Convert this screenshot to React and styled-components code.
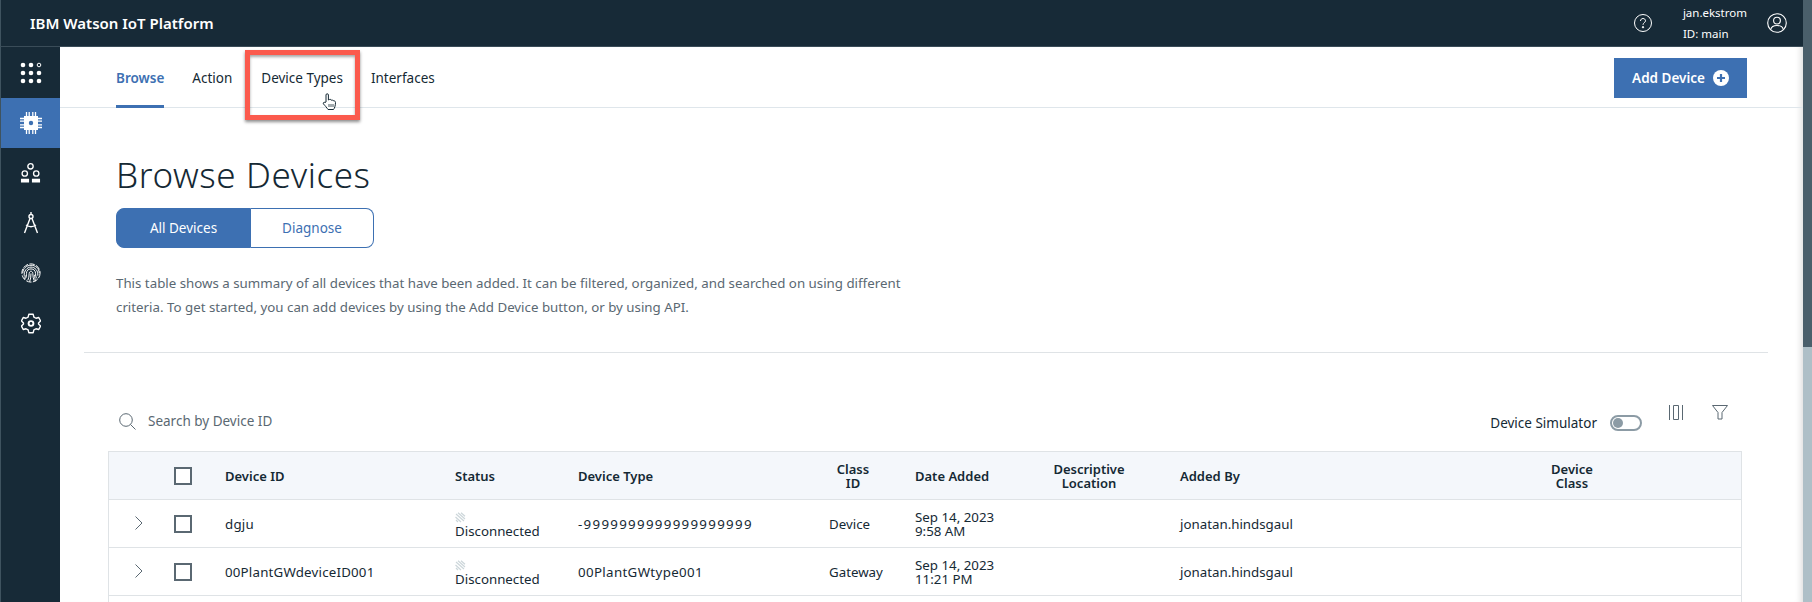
import React from "react";
import styled, { createGlobalStyle } from "styled-components";

const GlobalStyle = createGlobalStyle`
  html, body {
    margin: 0;
    padding: 0;
    height: 602px;
    overflow: hidden;
    background: #fff;
    font-family: "Noto Sans", "Liberation Sans", sans-serif;
    color: #152934;
  }
  * { box-sizing: border-box; }
`;

const Screen = styled.div`
  display: flex;
  width: 1812px;
  height: 602px;
  overflow: hidden;
`;

const Main = styled.div`
  flex: 1;
  display: flex;
  flex-direction: column;
  min-width: 0;
`;

const Scrollbar = styled.div`
  width: 9px;
  background: #aebfc7;
  display: flex;
  flex-direction: column;
`;

const ScrollThumb = styled.div`
  height: 347px;
  background: #4a5f6b;
`;

const Header = styled.header`
  height: 47px;
  flex: none;
  background: #172a37;
  border-left: 1px solid #3f535f;
  border-bottom: 1px solid #3a4c58;
  display: flex;
  align-items: center;
  padding: 0 16px 0 29px;
  color: #fff;
`;

const Brand = styled.div`
  font-size: 15px;
  font-weight: 600;
  flex: 1;
`;

const HeaderIcon = styled.div`
  display: flex;
  color: #fff;
`;

const User = styled.div`
  margin: 0 20px 0 31px;
  font-size: 11.5px;
  line-height: 21px;
  color: #fff;
`;

const Body = styled.div`
  flex: 1;
  display: flex;
  min-height: 0;
`;

const Sidebar = styled.nav`
  width: 60px;
  flex: none;
  background: #172a37;
  border-left: 1px solid #3f535f;
  padding-top: 1px;
`;

const SideItem = styled.div`
  height: 50px;
  display: flex;
  align-items: center;
  justify-content: center;
  color: #fff;
  background: ${(p) => (p.$active ? "#3d70b2" : "transparent")};
`;

const Content = styled.main`
  flex: 1;
  min-width: 0;
  box-shadow: inset -7px 0 6px -5px rgba(0, 0, 0, 0.14);
`;

const TabBar = styled.div`
  height: 61px;
  display: flex;
  align-items: flex-start;
  justify-content: space-between;
  padding: 11px 56px 0 56px;
  border-bottom: 1px solid #dfe6eb;
`;

const Tabs = styled.div`
  display: flex;
  height: 50px;
`;

const Tab = styled.div`
  position: relative;
  height: 50px;
  padding-top: 10px;
  margin-left: ${(p) => p.$gap}px;
  font-size: 13.5px;
  line-height: 20px;
  color: ${(p) => (p.$active ? "#3d70b2" : "#152934")};
  font-weight: ${(p) => (p.$active ? 600 : 400)};
  border-bottom: 3px solid ${(p) => (p.$active ? "#3d70b2" : "transparent")};
`;

const Highlight = styled.div`
  position: absolute;
  left: -16px;
  top: -8px;
  width: 115px;
  height: 70px;
  border: 5px solid #fb5a4d;
  box-shadow: 0 2px 3px rgba(0, 0, 0, 0.45), inset 0 2px 3px rgba(0, 0, 0, 0.35);
  pointer-events: none;
`;

const Cursor = styled.svg`
  position: absolute;
  left: 61px;
  top: 35px;
`;

const AddButton = styled.button`
  width: 133px;
  height: 40px;
  border: 0;
  background: #3d70b2;
  color: #fff;
  font: 600 13.5px "Noto Sans", sans-serif;
  display: flex;
  align-items: center;
  justify-content: center;
  gap: 8px;
  padding: 0;
`;

const PageHead = styled.section`
  padding: 0 0 0 56px;
`;

const Title = styled.h1`
  margin: 0;
  padding-top: 43px;
  font-size: 35px;
  line-height: 48px;
  font-weight: 300;
  color: #152934;
  letter-spacing: 0.6px;
`;

const Switcher = styled.div`
  display: flex;
  width: 258px;
  height: 40px;
  margin-top: 9px;
`;

const SwitchButton = styled.div`
  flex: ${(p) => (p.$on ? "0 0 135px" : "1")};
  display: flex;
  align-items: center;
  justify-content: center;
  font-size: 13.5px;
  color: ${(p) => (p.$on ? "#fff" : "#3d70b2")};
  background: ${(p) => (p.$on ? "#3d70b2" : "#fff")};
  border: 1px solid #3d70b2;
  border-left-width: ${(p) => (p.$on ? "1px" : "0")};
  border-radius: ${(p) => (p.$on ? "8px 0 0 8px" : "0 8px 8px 0")};
`;

const Description = styled.p`
  margin: 23px 0 0;
  width: 800px;
  font-size: 13.3px;
  line-height: 24px;
  color: #5a6872;
`;

const Divider = styled.hr`
  margin: 33px 35px 0 24px;
  border: 0;
  border-top: 1px solid #dfe3e6;
`;

const Toolbar = styled.div`
  height: 98px;
  padding-left: 59px;
  padding-right: 75px;
  display: flex;
  align-items: flex-start;
`;

const Search = styled.div`
  display: flex;
  align-items: center;
  gap: 12px;
  flex: 1;
  margin-top: 59px;
  font-size: 13.5px;
  color: #5a6872;
`;

const Simulator = styled.div`
  display: flex;
  align-items: center;
  margin-top: 61px;
  font-size: 13.5px;
  color: #152934;
`;

const Toggle = styled.div`
  position: relative;
  width: 32px;
  height: 16px;
  margin-left: 13px;
  border: 2px solid #8c9ba5;
  border-radius: 8px;
  background: #fff;
`;

const Knob = styled.div`
  position: absolute;
  left: 1px;
  top: 1px;
  width: 10px;
  height: 10px;
  border-radius: 50%;
  background: #8c9ba5;
`;

const ToolIcon = styled.div`
  display: flex;
  margin-top: 52px;
  margin-left: ${(p) => p.$gap}px;
  color: #5a6872;
`;

const Table = styled.div`
  margin: 0 61px 0 48px;
  border: 1px solid #dfe3e6;
  border-bottom: 0;
`;

const Row = styled.div`
  display: grid;
  grid-template-columns: 51px 65px 230px 123px 251px 86px 135px 130px 320px 1fr;
  align-items: center;
  height: 48px;
  border-bottom: 1px solid #dfe3e6;
  background: ${(p) => (p.$head ? "#f4f7fb" : "#fff")};
  font-size: 13.3px;
  color: #152934;
`;

const HeadCell = styled.div`
  font-weight: 600;
  font-size: 13px;
  line-height: 14px;
  text-align: ${(p) => (p.$pad ? "center" : "left")};
  padding-right: ${(p) => p.$pad || 0}px;
`;

const Cell = styled.div`
  line-height: 14px;
  letter-spacing: ${(p) => p.$spacing || 0}px;
`;

const StatusCell = styled.div`
  display: flex;
  flex-direction: column;
  line-height: 16px;
  padding-top: 4px;
`;

const Expander = styled.div`
  display: flex;
  justify-content: center;
  padding-left: 8px;
  padding-bottom: 2px;
  color: #5a6872;
`;

const Checkbox = styled.div`
  width: 18px;
  height: 18px;
  margin-left: 14px;
  border: 2px solid #5a6872;
  background: #fff;
`;

const icon = { fill: "none", stroke: "currentColor", strokeWidth: 1.4 };

const gridDots = [3, 11, 19].flatMap((y) => [3, 11, 19].map((x) => ({ x, y })));

const GridIcon = () => (
  <svg width="22" height="22" viewBox="0 0 22 22" fill="currentColor">
    {gridDots.map(({ x, y }) =>
      x === 19 && y === 3 ? (
        <circle key={`${x}-${y}`} cx={x} cy={y} r="1.8" fill="none" stroke="currentColor" strokeWidth="1" />
      ) : (
        <circle key={`${x}-${y}`} cx={x} cy={y} r="2.3" />
      )
    )}
  </svg>
);

const ChipIcon = () => (
  <svg width="22" height="22" viewBox="0 0 22 22" fill="currentColor">
    <path d="M6.500 0v22M9.200 0v22M12.800 0v22M15.500 0v22M0 6.500h22M0 9.200h22M0 12.800h22M0 15.500h22" stroke="currentColor" strokeWidth="1.300" />
    <path d="M4 4h14v14H4z" />
    <circle cx="11" cy="11" r="2.200" fill="#3d70b2" />
  </svg>
);

const PeopleIcon = () => (
  <svg width="21" height="21" viewBox="0 0 22 22">
    <circle cx="11" cy="3.500" r="2.800" {...icon} />
    <circle cx="5" cy="11" r="2.800" {...icon} />
    <circle cx="17" cy="11" r="2.800" {...icon} />
    <path d="M1 16.500h8.500V20.500H1zM12.500 16.500H21V20.500h-8.500z" fill="currentColor" />
  </svg>
);

const CompassIcon = () => (
  <svg width="22" height="22" viewBox="0 0 22 22">
    <circle cx="11" cy="4.500" r="2" {...icon} />
    <path d="M11 0v2.500M10 6.500 4.500 21M12 6.500 17.500 21M6 13c3 2 7 2 10 0" {...icon} />
  </svg>
);

const FingerprintIcon = () => (
  <svg width="20" height="20" viewBox="0 0 22 22" fill="none" stroke="currentColor" strokeWidth="1.100">
    <circle cx="11" cy="11" r="10" strokeDasharray="6 1.500" />
    <path d="M2 11c0-5 4-8.500 9-8.500s9 3.500 9 8.500" />
    <path d="M3.500 14c-.5-5 3-9.500 7.500-9.500s8 4 7.500 9.500" />
    <path d="M5 17c1-1.500 1-3.500 1-5.500 0-3 2-5 5-5s5 2 5 5c0 2.500.5 4 1.500 5.500" />
    <path d="M7.500 19c1-2 1.500-4.500 1.500-7.500 0-1 .8-2.500 2-2.500s2 1.500 2 2.500c0 3 .5 5.500 1.500 8" />
    <path d="M11 11.500c0 3.500-.5 6.500-1.500 9M4 17.500c.5-1 .5-2.500.5-4M16 20c-.5-2-1-4-1-7" />
  </svg>
);

const GearIcon = () => (
  <svg width="20" height="21" viewBox="0 0 22 24" fill="none" stroke="currentColor" strokeWidth="1.600">
    <path d="M8.500 1.500h5l.8 3.200 2.400 1.300 3.200-.9 2 3.900-2.300 2.500v1l2.300 2.500-2 3.900-3.200-.9-2.400 1.300-.8 3.200h-5l-.8-3.200-2.400-1.300-3.200.9-2-3.900L2.400 12.500v-1L.1 9l2-3.900 3.200.9 2.400-1.300z" strokeLinejoin="round" />
    <circle cx="11" cy="12" r="3.800" fill="currentColor" stroke="none" />
    <circle cx="11" cy="12" r="1.600" fill="#172a37" stroke="none" />
  </svg>
);

const HelpIcon = () => (
  <svg width="18" height="18" viewBox="0 0 18 18" fill="none" stroke="currentColor" strokeWidth="1">
    <circle cx="9" cy="9" r="8.500" />
    <path d="M6.500 7c0-1.500 1.100-2.500 2.500-2.500s2.500 1 2.500 2.300c0 1.800-2.500 1.900-2.500 4" />
    <circle cx="9" cy="13.200" r=".7" fill="currentColor" />
  </svg>
);

const UserIcon = () => (
  <svg width="20" height="20" viewBox="0 0 20 20" fill="none" stroke="currentColor" strokeWidth="1.100">
    <circle cx="10" cy="10" r="9.300" />
    <circle cx="10" cy="7.600" r="3.400" />
    <path d="M3.800 16.500c.5-2.800 2.600-4 6.200-4s5.700 1.200 6.200 4" />
  </svg>
);

const PlusIcon = () => (
  <svg width="16" height="16" viewBox="0 0 16 16">
    <circle cx="8" cy="8" r="8" fill="#fff" />
    <path d="M8 4v8M4 8h8" stroke="#3d70b2" strokeWidth="2.200" />
  </svg>
);

const SearchIcon = () => (
  <svg width="17" height="17" viewBox="0 0 17 17" fill="none" stroke="#5a6872" strokeWidth="1">
    <circle cx="7" cy="7" r="6.300" />
    <path d="M11.500 11.500 16.500 16.500" />
  </svg>
);

const ColumnsIcon = () => (
  <svg width="14" height="15" viewBox="0 0 14 15" fill="none" stroke="currentColor" strokeWidth="1">
    <path d="M.5 0v15M13.500 0v15M4.500.5h5v14h-5z" />
  </svg>
);

const FilterIcon = () => (
  <svg width="16" height="15" viewBox="0 0 16 15" fill="none" stroke="currentColor" strokeWidth="1">
    <path d="M.5.500h15L10 7.500v6.500H6V7.500z" />
  </svg>
);

const ChevronIcon = () => (
  <svg width="8" height="14" viewBox="0 0 8 14" fill="none" stroke="currentColor" strokeWidth="1">
    <path d="M.5.500 7 7 .5 13.500" />
  </svg>
);

const StatusIcon = () => (
  <svg width="11" height="11" viewBox="0 0 11 11" fill="none" stroke="#ccd6da" strokeWidth="1.200">
    <path d="M1 2l8 7M.5 5l5.500 5M3 .8l7 6.200M6 .8l4 3.500M1 8l2 2" />
  </svg>
);

const HandCursor = () => (
  <Cursor width="15" height="17" viewBox="0 0 15 17" fill="#fff" stroke="#152934" strokeWidth="1">
    <path d="M4 9V2a1.200 1.200 0 0 1 2.400 0v5l1-.5a1 1 0 0 1 1.500.500l1 .2a1 1 0 0 1 1.400.500l.8.200c1 0 1.400.8 1.400 1.600 0 3-1 6-2 7H6c-1-1.500-3-4-4.500-5.500-.8-1 .5-2.300 1.500-1.500z" />
    <path d="M7 11v3M9 11v3M11 11v3" strokeWidth=".8" />
  </Cursor>
);

const devices = [
  { id: "dgju", type: "-9999999999999999999", typeSpacing: 1.3, cls: "Device", date: "Sep 14, 2023", time: "9:58 AM" },
  { id: "00PlantGWdeviceID001", type: "00PlantGWtype001", typeSpacing: 0.35, cls: "Gateway", date: "Sep 14, 2023", time: "11:21 PM" },
];

const App = () => (
  <>
    <GlobalStyle />
    <Screen>
      <Main>
        <Header>
          <Brand>IBM Watson IoT Platform</Brand>
          <HeaderIcon><HelpIcon /></HeaderIcon>
          <User>
            jan.ekstrom
            <br />
            ID: main
          </User>
          <HeaderIcon><UserIcon /></HeaderIcon>
        </Header>
        <Body>
          <Sidebar>
            <SideItem><GridIcon /></SideItem>
            <SideItem $active><ChipIcon /></SideItem>
            <SideItem><PeopleIcon /></SideItem>
            <SideItem><CompassIcon /></SideItem>
            <SideItem><FingerprintIcon /></SideItem>
            <SideItem><GearIcon /></SideItem>
          </Sidebar>
          <Content>
            <TabBar>
              <Tabs>
                <Tab $active>Browse</Tab>
                <Tab $gap={28}>Action</Tab>
                <Tab $gap={29}>
                  Device Types
                  <Highlight />
                  <HandCursor />
                </Tab>
                <Tab $gap={28}>Interfaces</Tab>
              </Tabs>
              <AddButton>Add Device <PlusIcon /></AddButton>
            </TabBar>
            <PageHead>
              <Title>Browse Devices</Title>
              <Switcher>
                <SwitchButton $on>All Devices</SwitchButton>
                <SwitchButton>Diagnose</SwitchButton>
              </Switcher>
              <Description>
                This table shows a summary of all devices that have been added. It can be filtered, organized, and searched on using different criteria. To get started, you can add devices by using the Add Device button, or by using API.
              </Description>
            </PageHead>
            <Divider />
            <Toolbar>
              <Search><SearchIcon />Search by Device ID</Search>
              <Simulator>Device Simulator<Toggle><Knob /></Toggle></Simulator>
              <ToolIcon $gap={27}><ColumnsIcon /></ToolIcon>
              <ToolIcon $gap={29}><FilterIcon /></ToolIcon>
            </Toolbar>
            <Table>
              <Row $head>
                <div />
                <Checkbox />
                <HeadCell>Device ID</HeadCell>
                <HeadCell>Status</HeadCell>
                <HeadCell>Device Type</HeadCell>
                <HeadCell $pad={38}>Class<br />ID</HeadCell>
                <HeadCell>Date Added</HeadCell>
                <HeadCell $pad={52}>Descriptive<br />Location</HeadCell>
                <HeadCell>Added By</HeadCell>
                <HeadCell $pad={97}>Device<br />Class</HeadCell>
              </Row>
              {devices.map((d) => (
                <Row key={d.id}>
                  <Expander><ChevronIcon /></Expander>
                  <Checkbox />
                  <Cell $spacing={0.2}>{d.id}</Cell>
                  <StatusCell><StatusIcon />Disconnected</StatusCell>
                  <Cell $spacing={d.typeSpacing}>{d.type}</Cell>
                  <Cell>{d.cls}</Cell>
                  <Cell>{d.date}<br />{d.time}</Cell>
                  <div />
                  <Cell>jonatan.hindsgaul</Cell>
                  <div />
                </Row>
              ))}
              <Row />
            </Table>
          </Content>
        </Body>
      </Main>
      <Scrollbar><ScrollThumb /></Scrollbar>
    </Screen>
  </>
);

export default App;
